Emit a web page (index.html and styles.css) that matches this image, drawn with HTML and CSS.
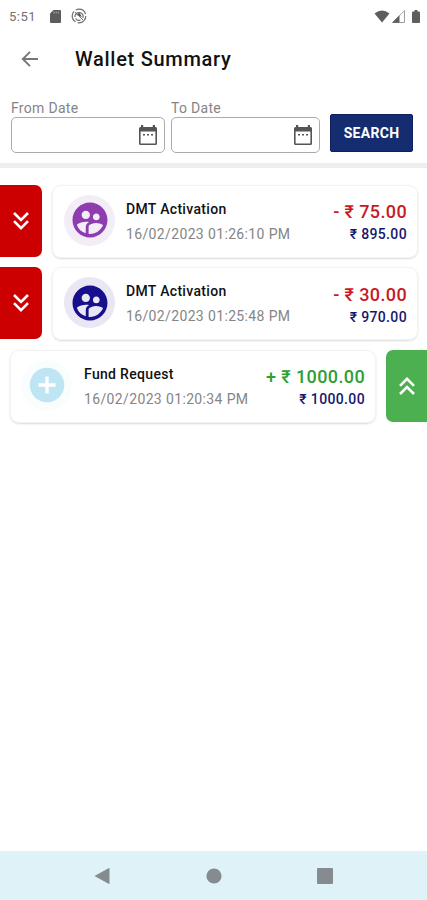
FILE: index.html
```
<!DOCTYPE html>
<html lang="en">
<head>
  <meta charset="UTF-8">
  <meta name="viewport" content="width=device-width, initial-scale=1.0">
  <title>Wallet Summary</title>
  <link rel="stylesheet" href="styles.css">
</head>
<body>
  <svg width="0" height="0" class="sprite" aria-hidden="true">
    <symbol id="users" viewBox="0 0 24 24">
      <path d="M11.99 2c-5.52 0-10 4.48-10 10s4.48 10 10 10 10-4.48 10-10-4.48-10-10-10zm3.61 6.34c1.07 0 1.93.86 1.93 1.93 0 1.07-.86 1.93-1.93 1.93-1.07 0-1.93-.86-1.93-1.93-.01-1.07.86-1.93 1.93-1.93zm-6-1.58c1.3 0 2.36 1.06 2.36 2.36 0 1.3-1.06 2.36-2.36 2.36s-2.36-1.06-2.36-2.36c0-1.31 1.05-2.36 2.36-2.36zm0 9.13v3.75c-2.4-.75-4.3-2.6-5.14-4.96 1.05-1.12 3.67-1.69 5.14-1.69.53 0 1.2.08 1.9.22-1.64.87-1.9 2.02-1.9 2.68zM11.99 20c-.27 0-.53-.01-.79-.04v-4.07c0-1.42 2.94-2.13 4.4-2.13 1.07 0 2.92.39 3.84 1.15-1.17 2.97-4.06 5.09-7.45 5.09z"/>
    </symbol>
    <symbol id="calendar" viewBox="0 0 20 22">
      <path fill-rule="evenodd" d="M3 1h2.200v2h9.600V1H17v2h.800Q19 3 19 4.500V19.500Q19 21 17.500 21H2.500Q1 21 1 19.500V4.500Q1 3 2.500 3H3zM2.600 7.500v11.900h14.800V7.500z"/>
      <path d="M5 10h2v1.600H5zM9 10h2v1.600H9zM13 10h2v1.600h-2z"/>
    </symbol>
    <symbol id="chevrons" viewBox="0 0 18 20">
      <path fill="none" stroke="currentColor" stroke-width="2.600" d="M2 2l7 7 7-7M2 10.200l7 7 7-7"/>
    </symbol>
  </svg>

  <div class="status-bar">
    <span class="time">5:51</span>
    <svg class="sd" width="11" height="13" viewBox="0 0 11 13"><path d="M3.500 0H10q1 0 1 1v11q0 1-1 1H1q-1 0-1-1V3.500z" fill="#5c5c5c"/><path d="M4 1.500v2M6.200 1.500v2M8.400 1.500v2" stroke="#aaa"/></svg>
    <svg class="sync" width="16" height="16" viewBox="0 0 16 16" fill="none" stroke="#707070"><circle cx="8" cy="8" r="6.800" stroke-width="1.200" stroke-dasharray="12 2.240"/><path d="M4 9a4.200 4.200 0 0 1 8-2v3M4.500 10.500a4 4 0 0 0 5 1.500" stroke-width="1.200"/><path d="M5 6.500l3.500-1.500 2.500 4-3-1z" fill="#555" stroke="none"/><path d="M4 4l8 8" stroke-width="1"/></svg>
    <div class="signals">
      <svg width="16" height="13" viewBox="0 0 16 13"><path d="M8 12.500L.5 3.500Q8-2.500 15.500 3.500z" fill="#5e5e5e"/></svg>
      <svg width="13" height="13" viewBox="0 0 13 13"><path d="M12.500.7v11.800H.7z" fill="#fff" stroke="#858585" stroke-width=".8"/><path d="M0 12.700L7.500 5.200v7.500z" fill="#5e5e5e"/></svg>
      <svg width="8" height="13" viewBox="0 0 8 13"><path d="M2.500 0h3v1.400H7q1 0 1 1V12q0 1-1 1H1q-1 0-1-1V2.400q0-1 1-1h1.500z" fill="#5e5e5e"/></svg>
    </div>
  </div>

  <header class="app-bar">
    <svg class="back" width="18" height="18" viewBox="0 0 18 18"><path d="M17 9H2.500M9 1.800L1.800 9 9 16.200" fill="none" stroke="#777" stroke-width="1.900"/></svg>
    <h1>Wallet Summary</h1>
  </header>

  <section class="filters">
    <div class="field from">
      <span>From Date</span>
      <div class="date-box"><svg width="20" height="22"><use href="#calendar"/></svg></div>
    </div>
    <div class="field to">
      <span>To Date</span>
      <div class="date-box"><svg width="20" height="22"><use href="#calendar"/></svg></div>
    </div>
    <button class="search-btn">SEARCH</button>
  </section>

  <main class="list">
    <div class="entry debit">
      <div class="tag"><svg width="18" height="20"><use href="#chevrons"/></svg></div>
      <article class="card">
        <div class="avatar purple"><svg width="42" height="42"><use href="#users"/></svg></div>
        <div class="info"><h2>DMT Activation</h2><p>16/02/2023 01:26:10 PM</p></div>
        <div class="money"><strong>- ₹ 75.00</strong><b>₹ 895.00</b></div>
      </article>
    </div>
    <div class="entry debit">
      <div class="tag"><svg width="18" height="20"><use href="#chevrons"/></svg></div>
      <article class="card">
        <div class="avatar navy"><svg width="42" height="42"><use href="#users"/></svg></div>
        <div class="info"><h2>DMT Activation</h2><p>16/02/2023 01:25:48 PM</p></div>
        <div class="money"><strong>- ₹ 30.00</strong><b>₹ 970.00</b></div>
      </article>
    </div>
    <div class="entry credit">
      <article class="card">
        <div class="avatar sky"><svg width="36" height="36" viewBox="0 0 36 36"><circle cx="18" cy="18" r="17.300"/><path d="M18 9.500v17M9.500 18h17" stroke="#fff" stroke-width="3.400"/></svg></div>
        <div class="info"><h2>Fund Request</h2><p>16/02/2023 01:20:34 PM</p></div>
        <div class="money"><strong>+ ₹ 1000.00</strong><b>₹ 1000.00</b></div>
      </article>
      <div class="tag"><svg width="18" height="20"><use href="#chevrons"/></svg></div>
    </div>
  </main>

  <nav class="nav-bar">
    <svg width="16" height="18" viewBox="0 0 16 18"><path d="M.5 9L15.500.7v16.600z"/></svg>
    <svg width="16" height="16" viewBox="0 0 16 16"><circle cx="8" cy="8" r="7.600"/></svg>
    <svg width="16" height="16" viewBox="0 0 16 16"><rect width="16" height="16" rx="1"/></svg>
  </nav>
</body>
</html>
```
FILE: styles.css
```
:root { --red: #cc0000; --green: #4caf50; --navy: #132d70; --grey: #858585; }
* { box-sizing: border-box; }
body { margin: 0; height: 900px; display: flex; flex-direction: column; background: #fff; font-family: Roboto, sans-serif; color: #111; overflow: hidden; }
h1, h2, p { margin: 0; }
svg { display: block; flex: none; }
.sprite { position: absolute; }

.status-bar { height: 32px; padding: 0 7px 0 9px; display: flex; align-items: center; }
.time { width: 41px; font-size: 13px; letter-spacing: 0.5px; color: #707070; }
.sync { margin-left: 10px; }
.signals { margin-left: auto; display: flex; gap: 2px; }
.signals svg:last-child { margin-left: 5px; }

.app-bar { height: 54px; padding-left: 21px; display: flex; align-items: center; }
.app-bar h1 { margin-left: 36px; font-size: 20px; font-weight: 500; letter-spacing: 0.72px; }

.filters { height: 82px; padding: 14px 14px 0 11px; border-bottom: 5px solid #eee; display: flex; align-items: flex-start; }
.field span { display: block; height: 17px; line-height: 16px; font-size: 14px; letter-spacing: 0.3px; color: var(--grey); }
.from { width: 154px; }
.to { width: 149px; margin-left: 6px; }
.date-box { height: 36px; padding-right: 6px; border: 1px solid #aaa; border-radius: 5px; display: flex; align-items: center; justify-content: flex-end; color: #555; fill: #555; }
.search-btn { width: 83px; height: 38px; margin: 14px 0 0 10px; padding: 0; border: 1px solid #10205f; border-radius: 2px; background: var(--navy); color: #fff; font: 700 14px Roboto, sans-serif; letter-spacing: 0.3px; }

.list { flex: 1; padding-top: 16.5px; display: flex; flex-direction: column; gap: 9.7px; }
.entry { height: 73px; display: flex; }
.tag { width: 42px; height: 72px; display: flex; align-items: center; justify-content: center; color: #fff; }
.debit .tag { background: var(--red); border-radius: 0 7px 7px 0; }
.credit .tag { width: 41px; background: var(--green); border-radius: 7px 0 0 7px; }
.credit .tag svg { transform: rotate(180deg); }
.card { width: 366px; height: 73px; padding: 0 10px 0 11px; display: flex; align-items: center; border: 1px solid #f3f3f3; border-radius: 9px; box-shadow: 0 1px 2px rgba(0,0,0,0.15); }
.debit .card { margin-left: 10px; }
.credit .card { margin: 0 10px; }
.credit .card { padding-left: 10px; }
.avatar { width: 51px; height: 51px; margin-bottom: 2px; border-radius: 50%; display: flex; align-items: center; justify-content: center; }
.purple { background: #f3edf7; fill: #8e3daf; }
.navy { background: #e8e7f3; fill: #170f8b; }
.sky { background: #fafdfe; fill: #bfe4f3; }
.info { flex: 1; margin-left: 11px; padding-top: 1.5px; white-space: nowrap; }
.credit .info { margin-left: 12px; }
.info h2 { font-size: 14px; line-height: 25px; font-weight: 500; letter-spacing: 0.32px; }
.info p { font-size: 14px; line-height: 25px; letter-spacing: 0.36px; color: var(--grey); }
.money { display: flex; flex-direction: column; align-items: flex-end; padding-top: 2px; white-space: nowrap; }
.money strong { font-size: 18px; line-height: 24px; font-weight: 500; letter-spacing: 0.38px; }
.money b { font-size: 14px; line-height: 20px; font-weight: 500; letter-spacing: 0.36px; color: #17166d; }
.debit strong { color: #c9191e; }
.credit strong { color: #2ca033; }

.nav-bar { height: 49px; padding: 0 94px; display: flex; align-items: center; justify-content: space-between; background: #dff2f8; fill: #858c90; }
```
